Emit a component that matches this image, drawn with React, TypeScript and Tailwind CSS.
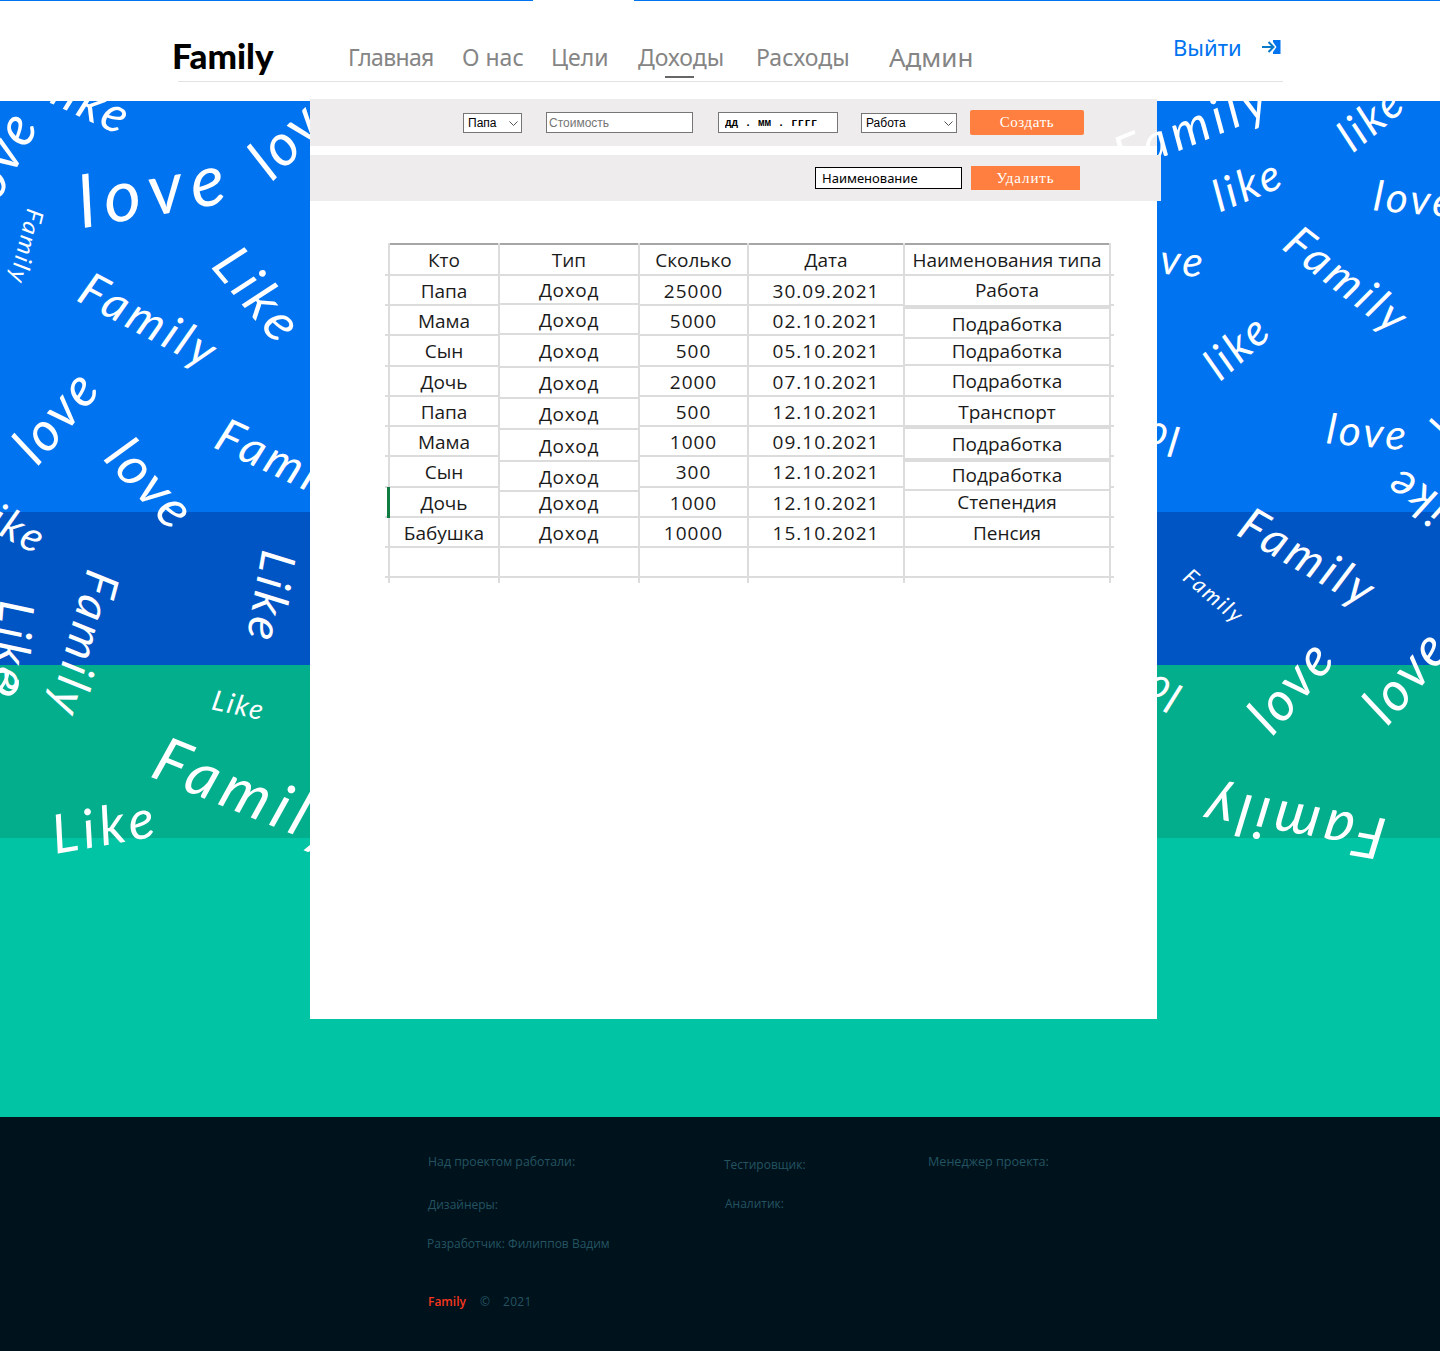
const words: [string, string][] = [
  ["love", "left-[155px] top-[187px] rotate-[-10deg] text-[72px] tracking-[9px]"],
  ["love", "left-[-3px] top-[160px] rotate-[-62deg] text-[56px] tracking-[3px]"],
  ["like", "left-[93px] top-[102px] rotate-[25deg] text-[50px] tracking-[3px]"],
  ["love", "left-[295px] top-[128px] rotate-[-45deg] text-[58px] tracking-[3px]"],
  ["Family", "left-[27px] top-[247px] rotate-[104deg] text-[24px] tracking-[2px]"],
  ["Family", "left-[150px] top-[320px] rotate-[28deg] text-[47px] tracking-[4px]"],
  ["Like", "left-[260px] top-[295px] rotate-[50deg] text-[54px] tracking-[5px]"],
  ["love", "left-[55px] top-[415px] rotate-[-50deg] text-[54px] tracking-[3px]"],
  ["love", "left-[152px] top-[483px] rotate-[47deg] text-[54px] tracking-[3px]"],
  ["Family", "left-[288px] top-[463px] rotate-[25deg] text-[47px] tracking-[4px]"],
  ["like", "left-[14px] top-[525px] rotate-[28deg] text-[42px] tracking-[3px]"],
  ["Family", "left-[85px] top-[645px] rotate-[105deg] text-[47px] tracking-[4px]"],
  ["Like", "left-[272px] top-[598px] rotate-[100deg] text-[48px] tracking-[4px]"],
  ["Like", "left-[14px] top-[648px] rotate-[95deg] text-[48px] tracking-[4px]"],
  ["Like", "left-[239px] top-[704px] rotate-[12deg] text-[28px] tracking-[2px]"],
  ["Family", "left-[252px] top-[792px] rotate-[22deg] text-[62px] tracking-[6px]"],
  ["Like", "left-[105px] top-[825px] rotate-[-10deg] text-[54px] tracking-[5px]"],
  ["like", "left-[1370px] top-[117px] rotate-[-40deg] text-[44px] tracking-[3px]"],
  ["like", "left-[1247px] top-[183px] rotate-[-22deg] text-[44px] tracking-[3px]"],
  ["love", "left-[1415px] top-[198px] rotate-[5deg] text-[42px] tracking-[3px]"],
  ["love", "left-[1165px] top-[258px] rotate-[5deg] text-[42px] tracking-[3px]"],
  ["Family", "left-[1348px] top-[280px] rotate-[38deg] text-[45px] tracking-[4px]"],
  ["like", "left-[1236px] top-[345px] rotate-[-42deg] text-[44px] tracking-[3px]"],
  ["love", "left-[1368px] top-[431px] rotate-[5deg] text-[42px] tracking-[3px]"],
  ["love", "left-[1462px] top-[400px] rotate-[-55deg] text-[42px] tracking-[3px]"],
  ["love", "left-[1138px] top-[436px] rotate-[190deg] text-[42px] tracking-[3px]"],
  ["Like", "left-[1425px] top-[505px] rotate-[215deg] text-[46px] tracking-[4px]"],
  ["Family", "left-[1309px] top-[557px] rotate-[30deg] text-[47px] tracking-[4px]"],
  ["Family", "left-[1214px] top-[596px] rotate-[40deg] text-[22px] tracking-[2px]"],
  ["love", "left-[1140px] top-[684px] rotate-[205deg] text-[42px] tracking-[3px]"],
  ["love", "left-[1290px] top-[685px] rotate-[-50deg] text-[54px] tracking-[3px]"],
  ["love", "left-[1405px] top-[675px] rotate-[-50deg] text-[54px] tracking-[3px]"],
  ["Family", "left-[1292px] top-[825px] rotate-[190deg] text-[58px] tracking-[5px]"],
  ["love", "left-[-22px] top-[705px] rotate-[-50deg] text-[54px] tracking-[3px]"],
];

const std = ["h-[30px]", "h-[30px]", "h-[31px]", "h-[30px]", "h-[30px]", "h-[30px]", "h-[31px]", "h-[30px]", "h-[30px]"];
const types = ["h-[29px]", "h-[30px]", "h-[33px]", "h-[31px]", "h-[31px]", "h-[32px]", "h-[30px]", "h-[26px] pb-[4px]", "h-[30px]"];
const names = [
  "h-[31px] pb-[2px]",
  "h-[32px] border-t-2",
  "h-[27px] pb-[2px]",
  "h-[31px]",
  "h-[30px]",
  "h-[33px] border-t-2",
  "h-[31px] border-t-2 pb-[2px]",
  "h-[27px] pb-[4px]",
  "h-[30px]",
];
const blank = Array(9).fill("");
const cols: { w: string; head: string; vals: string[]; hs: string[]; vt?: string; gutter?: boolean }[] = [
  { w: "w-[3px]", head: "", vals: blank, hs: std, gutter: true },
  { w: "w-[112px] border-l-2 border-r-2", head: "Кто", vals: ["Папа", "Мама", "Сын", "Дочь", "Папа", "Мама", "Сын", "Дочь", "Бабушка"], hs: std },
  { w: "w-[140px] border-r-2", head: "Тип", vals: Array(9).fill("Доход"), hs: types, vt: "tracking-[0.7px]" },
  { w: "w-[109px] border-r-2", head: "Сколько", vals: ["25000", "5000", "500", "2000", "500", "1000", "300", "1000", "10000"], hs: std, vt: "tracking-[1px]" },
  { w: "w-[156px] border-r-2", head: "Дата", vals: ["30.09.2021", "02.10.2021", "05.10.2021", "07.10.2021", "12.10.2021", "09.10.2021", "12.10.2021", "12.10.2021", "15.10.2021"], hs: std, vt: "tracking-[1px]" },
  { w: "w-[206px] border-r-2", head: "Наименования типа", vals: ["Работа", "Подработка", "Подработка", "Подработка", "Транспорт", "Подработка", "Подработка", "Степендия", "Пенсия"], hs: names },
  { w: "w-[3px]", head: "", vals: blank, hs: std, gutter: true },
];

function ExcelTable() {
  return (
    <div className="relative ml-[75px] mt-[42px] flex w-[729px] font-['Open_Sans',sans-serif] text-[19px] font-medium leading-none text-[#1a1a1a]">
      {cols.map((c, i) => (
        <div key={i} className={`${c.w} flex flex-col border-[#dcdcdc]`}>
          <div className={c.gutter ? "h-[2px]" : "h-[2px] bg-[#a6a6a6]"} />
          <div className="flex h-[31px] items-center justify-center whitespace-nowrap border-b-2 border-[#dcdcdc] pt-[2px]">{c.head}</div>
          {c.vals.map((t, j) => (
            <div key={j} className={`${c.hs[j]} ${c.vt ?? ""} flex items-center justify-center whitespace-nowrap border-b-2 border-[#dcdcdc] pt-[2px]`}>
              {t}
            </div>
          ))}
          <div className="h-[30px] border-b-2 border-[#dcdcdc]" />
          <div className="h-[5px]" />
        </div>
      ))}
      <div className="absolute left-[2px] top-[244px] h-[31px] w-[3px] bg-[#107c41]" />
    </div>
  );
}

function Chevron() {
  return (
    <svg className="pointer-events-none absolute right-[4px] top-[8px]" width="9" height="5" viewBox="0 0 9 5" fill="none">
      <path d="M0.5 0.5 4.5 4.5 8.5 0.5" stroke="#555555" strokeWidth="1" />
    </svg>
  );
}

function Panel() {
  return (
    <section className="relative -mt-[2px] ml-[310px] h-[920px] w-[847px] bg-white font-['Liberation_Sans',sans-serif] text-[12px]">
      <div className="flex h-[47px] items-center bg-[#eeecec] pl-[153px]">
        <div className="relative h-[20px] w-[59px]">
          <select defaultValue="Папа" className="h-full w-full appearance-none border border-[#767676] bg-white pl-[4px] text-black">
            <option>Папа</option>
          </select>
          <Chevron />
        </div>
        <input placeholder="Стоимость" className="ml-[24px] h-[21px] w-[147px] border border-[#767676] bg-white px-[2px] placeholder:text-[#757575]" />
        <input readOnly defaultValue="дд . мм . гггг" className="ml-[25px] h-[21px] w-[120px] border border-[#767676] bg-white pl-[6px] font-['Liberation_Mono',monospace] text-[11px] font-bold text-black" />
        <div className="relative ml-[23px] h-[20px] w-[96px]">
          <select defaultValue="Работа" className="h-full w-full appearance-none border border-[#767676] bg-white pl-[4px] text-black">
            <option>Работа</option>
          </select>
          <Chevron />
        </div>
        <button className="ml-[13px] h-[25px] w-[114px] rounded-[2px] bg-[#ff7f40] font-['Liberation_Serif',serif] text-[15px] tracking-[0.6px] text-white">Создать</button>
      </div>
      <span className="absolute left-[882px] top-[26px] -translate-x-1/2 -translate-y-1/2 rotate-[-22deg] whitespace-nowrap font-['Lato',sans-serif] text-[50px] italic leading-none tracking-[5px] text-white">Family</span>
      <div className="relative mt-[9px] flex h-[46px] w-[851px] items-center bg-[#eeecec] pl-[505px]">
        <input readOnly defaultValue="Наименование" className="h-[22px] w-[147px] border border-black bg-white pl-[6px] font-['Noto_Sans',sans-serif] text-[13px] text-black" />
        <button className="ml-[9px] h-[24px] w-[109px] bg-[#ff7f40] font-['Liberation_Serif',serif] text-[15px] tracking-[0.9px] text-white">Удалить</button>
      </div>
      <ExcelTable />
    </section>
  );
}

export default function App() {
  return (
    <div className="w-[1440px] bg-white font-['Noto_Sans',sans-serif]">
      <header className="h-[101px] bg-white">
        <div className="flex h-px">
          <div className="w-[533px] bg-[#0073f0]" />
          <div className="w-[101px]" />
          <div className="flex-1 bg-[#0073f0]" />
        </div>
        <div className="relative ml-[172px] flex h-[81px] w-[1111px] items-start">
          <div className="absolute bottom-0 left-[6px] right-0 h-px bg-[#e2e2e2]" />
          <div className="mt-[32px] w-[176px] font-['Lato',sans-serif] text-[35px] font-black leading-[44px] text-black">Family</div>
          <nav className="mt-[39px] flex text-[23px] leading-[34px] text-[#858585]">
            <a className="w-[114px] tracking-[-0.7px]">Главная</a>
            <a className="w-[89px]">О нас</a>
            <a className="w-[87px]">Цели</a>
            <a className="relative w-[118px]">
              Доходы
              <span className="absolute left-[27px] top-[36px] h-[2px] w-[29px] bg-[#666666]" />
            </a>
            <a className="w-[133px]">Расходы</a>
            <a className="w-[86px] text-[26px]">Админ</a>
          </nav>
          <div className="ml-[198px] mt-[29px] flex items-center gap-[20px] text-[22px] leading-[34px] text-[#0073f0]">
            <span>Выйти</span>
            <svg width="19" height="14" viewBox="0 0 19 14" fill="none">
              <path d="M11 0H18.5V14H11V12L14.5 7 11 2Z" fill="#0073f0" />
              <path d="M0 7h11M6.5 2 11.5 7 6.5 12" stroke="#0a7ac8" strokeWidth="2" />
            </svg>
          </div>
        </div>
      </header>

      <main className="relative flow-root h-[1016px] bg-[linear-gradient(#0073f0_0_411px,#0055c4_411px_564px,#03ae8d_564px_737px,#00c4a3_737px)]">
        <div className="absolute inset-0 overflow-hidden">
          <div className="absolute left-0 top-[-101px] h-[1117px] w-[1440px] text-white">
            {words.map(([t, c], i) => (
              <span key={i} className={`absolute -translate-x-1/2 -translate-y-1/2 whitespace-nowrap font-['Lato',sans-serif] italic leading-none ${c}`}>
                {t}
              </span>
            ))}
          </div>
        </div>
        <Panel />
      </main>

      <footer className="flex h-[234px] bg-[#00121c] pl-[428px] pt-[36px] font-['Open_Sans',sans-serif] text-[12px] leading-[18px] text-[#245461]">
        <div className="w-[296px]">
          <p className="text-[12.3px]">Над проектом работали:</p>
          <p className="mt-[25px]">Дизайнеры:</p>
          <p className="mt-[21px] -ml-px">Разработчик: Филиппов Вадим</p>
          <p className="mt-[40px] flex">
            <span className="w-[52px] font-semibold text-[#f5371f]">Family</span>
            <span className="w-[23px]">©</span>
            <span className="tracking-[0.3px]">2021</span>
          </p>
        </div>
        <div className="w-[204px] pt-[3px]">
          <p>Тестировщик:</p>
          <p className="ml-px mt-[21px]">Аналитик:</p>
        </div>
        <div>
          <p className="text-[12.6px]">Менеджер проекта:</p>
        </div>
      </footer>
    </div>
  );
}
